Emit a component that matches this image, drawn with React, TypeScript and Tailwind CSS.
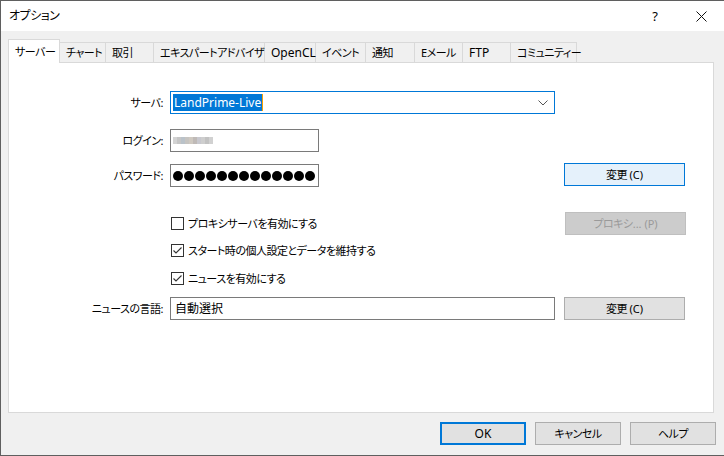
import React from 'react';

const tabs = [
  { label: 'サーバー', w: 'w-[52px]', active: true },
  { label: 'チャート', w: 'w-[46px]' },
  { label: '取引', w: 'w-[48px]' },
  { label: 'エキスパートアドバイザ', w: 'w-[111px]' },
  { label: 'OpenCL', w: 'w-[51px]', latin: true },
  { label: 'イベント', w: 'w-[50px]' },
  { label: '通知', w: 'w-[49px]' },
  { label: 'Eメール', w: 'w-[48px]' },
  { label: 'FTP', w: 'w-[48px]', latin: true },
  { label: 'コミュニティー', w: 'w-[66px]' },
];

const Check = ({ checked }: { checked?: boolean }) => (
  <div className="w-[13px] h-[13px] border border-[#333333] bg-white shrink-0">
    {checked && (
      <svg width="11" height="11" viewBox="0 0 11 11">
        <path d="M1.5 5.5 L4 8 L9.5 2.5" fill="none" stroke="#333333" strokeWidth="1.1" />
      </svg>
    )}
  </div>
);

const Label = ({ text }: { text: string }) => (
  <div className="w-[154px] text-right shrink-0 mr-[7px] whitespace-nowrap">{text}</div>
);

const Btn = ({ children, variant = 'normal', w = 'w-[121px]' }: { children: React.ReactNode; variant?: 'normal' | 'focus' | 'disabled' | 'default'; w?: string }) => {
  const styles = {
    normal: 'border border-[#adadad] bg-[#e1e1e1] text-black',
    focus: 'border border-[#0078d7] bg-[#e5f1fb] text-black',
    disabled: 'border border-[#bfbfbf] bg-[#cccccc] text-[#9a9a9a]',
    default: 'border-2 border-[#0078d7] bg-[#e1e1e1] text-black',
  }[variant];
  return (
    <div className={`${w} h-[23px] flex items-center justify-center shrink-0 whitespace-nowrap ${styles}`}>
      <span>{children}</span>
    </div>
  );
};

const Latin = ({ children }: { children: React.ReactNode }) => (
  <span className="tracking-normal">{children}</span>
);

export default function App() {
  return (
    <div className="w-[724px] h-[456px] flex flex-col bg-[#f0f0f0] border-t border-l border-b border-[#5f5f5f] text-[11px] tracking-[-0.5px] leading-[16px] text-black font-['Noto_Sans','Noto_Sans_CJK_JP',sans-serif] [font-feature-settings:'palt'] overflow-hidden">
      {/* title bar */}
      <div className="h-[30px] bg-white flex items-center shrink-0">
        <div className="pl-[8px] flex-1 text-[12px]">オプション</div>
        <div className="w-[46px] text-center text-[13px] tracking-normal">?</div>
        <div className="w-[46px] flex justify-center">
          <svg width="11" height="11" viewBox="0 0 11 11">
            <path d="M0.5 0.5 L10.5 10.5 M10.5 0.5 L0.5 10.5" stroke="#111" strokeWidth="1" />
          </svg>
        </div>
      </div>

      {/* tabs */}
      <div className="flex items-end h-[23px] mt-[8px] ml-[7px] shrink-0">
        {tabs.map((t) =>
          t.active ? (
            <div key={t.label} className={`${t.w} h-[24px] -mb-px relative z-10 bg-white border-l border-t border-r border-[#d9d9d9] flex items-end pb-[3px] pl-[6px] whitespace-nowrap`}>
              {t.label}
            </div>
          ) : (
            <div key={t.label} className={`${t.w} h-[20px] bg-[#f0f0f0] border-t border-r border-[#d9d9d9] flex items-end pb-[1px] pl-[6px] whitespace-nowrap ${t.latin ? 'text-[12px] tracking-normal' : ''}`}>
              {t.label}
            </div>
          )
        )}
      </div>

      {/* panel */}
      <div className="ml-[7px] w-[706px] h-[351px] bg-white border border-[#d9d9d9] shrink-0 flex flex-col">
        {/* server */}
        <div className="flex items-center mt-[28px] h-[23px]">
          <Label text="サーバ:" />
          <div className="w-[385px] h-[23px] border border-[#0078d7] flex items-center pl-[2px] pr-[6px]">
            <span className="bg-[#0078d7] text-white px-[1px] leading-[17px] text-[12px] tracking-normal">LandPrime-Live</span>
            <span className="w-px h-[17px] bg-[#f7a000]" />
            <div className="flex-1" />
            <svg width="10" height="6" viewBox="0 0 10 6">
              <path d="M0.5 0.5 L5 5 L9.5 0.5" fill="none" stroke="#555" strokeWidth="1" />
            </svg>
          </div>
        </div>

        {/* login */}
        <div className="flex items-center mt-[15px] h-[23px]">
          <Label text="ログイン:" />
          <div className="w-[149px] h-[23px] border border-[#7a7a7a] flex items-center pl-[2px]">
            <div className="flex blur-[0.6px] opacity-80">
              {['#c9c9c9', '#b8b8b8', '#aab4bc', '#b9b6b2', '#c4bcb2', '#b0aaa6', '#bbbbc2', '#c2c2c2', '#b4b4b4', '#c6c6c6'].map((c, i) => (
                <div key={i} className="w-[4px] h-[7px]" style={{ backgroundColor: c }} />
              ))}
            </div>
          </div>
        </div>

        {/* password */}
        <div className="flex items-center mt-[12px] h-[23px]">
          <Label text="パスワード:" />
          <div className="w-[149px] h-[23px] border border-[#7a7a7a] flex items-center pl-[2px] gap-[1px]">
            {Array.from({ length: 13 }).map((_, i) => (
              <div key={i} className="w-[10px] h-[10px] rounded-full bg-black shrink-0" />
            ))}
          </div>
          <div className="w-[245px]" />
          <div className="-mt-[2px]">
            <Btn variant="focus">変更 <Latin>(C)</Latin></Btn>
          </div>
        </div>

        {/* proxy */}
        <div className="flex items-center mt-[25px] h-[23px]">
          <div className="w-[162px] shrink-0" />
          <div className="w-[385px] flex items-center gap-[4px]">
            <Check />
            <span>プロキシサーバを有効にする</span>
          </div>
          <div className="w-[9px]" />
          <Btn variant="disabled">プロキシ<Latin>... (P)</Latin></Btn>
        </div>

        <div className="flex items-center mt-[4px] h-[23px]">
          <div className="w-[162px] shrink-0" />
          <div className="flex items-center gap-[4px]">
            <Check checked />
            <span>スタート時の個人設定とデータを維持する</span>
          </div>
        </div>

        <div className="flex items-center mt-[5px] h-[23px]">
          <div className="w-[162px] shrink-0" />
          <div className="flex items-center gap-[4px]">
            <Check checked />
            <span>ニュースを有効にする</span>
          </div>
        </div>

        {/* news language */}
        <div className="flex items-center mt-[7px] h-[23px]">
          <Label text="ニュースの言語:" />
          <div className="w-[385px] h-[23px] border border-[#7a7a7a] flex items-center pl-[4px] text-[12px] tracking-normal">自動選択</div>
          <div className="w-[9px]" />
          <Btn>変更 <Latin>(C)</Latin></Btn>
        </div>
      </div>

      {/* bottom buttons */}
      <div className="flex mt-[9px] ml-[439px] gap-[9px]">
        <Btn variant="default" w="w-[86px] text-[12px] tracking-normal">OK</Btn>
        <Btn w="w-[86px]">キャンセル</Btn>
        <Btn w="w-[86px]">ヘルプ</Btn>
      </div>
    </div>
  );
}
